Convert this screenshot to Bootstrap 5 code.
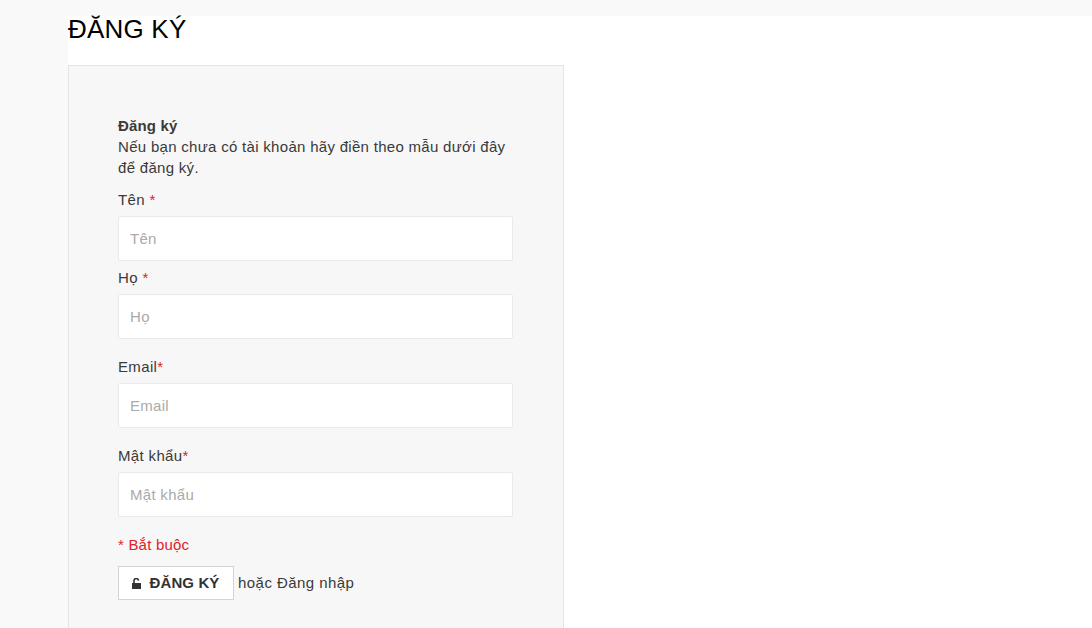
<!DOCTYPE html>
<html lang="vi">
<head>
    <meta charset="UTF-8">
    <meta name="viewport" content="width=device-width, initial-scale=1.0">
    <title>Đăng ký</title>
    <link href="https://cdn.jsdelivr.net/npm/bootstrap@5.3.2/dist/css/bootstrap.min.css" rel="stylesheet">
    <style>
        html, body { height: 628px; overflow: hidden; }
        body { background: #f9f9f9; font-family: "Liberation Sans", Arial, sans-serif; font-size: 15px; color: #3a3a3a; letter-spacing: .45px; }
        .page-wrap { margin: 16px 0 0 68px; background: #fff; height: 612px; }
        .page-title { font-size: 26px; font-weight: 400; line-height: 27px; color: #000; margin: 0; height: 49px; letter-spacing: .2px; }
        .reg-box { width: 496px; height: 570px; background: #f7f7f7; border: 1px solid #e4e4e4; padding: 50px 49px 0; }
        .reg-intro { line-height: 21px; margin: 0 0 11px; width: 395px; letter-spacing: .3px; }
        .reg-intro strong { display: block; line-height: 20px; letter-spacing: .15px; }
        .reg-label { display: block; line-height: 22px; margin-bottom: 5px; letter-spacing: .35px; }
        .req { color: #e2202c; }
        .reg-input { display: block; height: 45px; width: 395px; border: 1px solid #eaeaea; border-radius: 2px; padding: 0 11px; font-size: 15px; letter-spacing: .3px; background: #fff; color: #333; }
        .reg-input::placeholder { color: #aaa; opacity: 1; }
        .field-1 { margin-bottom: 6px; }
        .field-2 { margin-bottom: 17px; }
        .req-note { color: #e2202c; line-height: 22px; margin: 17px 0 10px; letter-spacing: .2px; }
        .reg-btn { height: 34px; width: 116px; background: #fff; border: 1px solid #d4d4d4; border-radius: 0; font-weight: 700; color: #333; font-size: 15px; letter-spacing: .1px; padding: 0 1px 0 0; column-gap: 9px; }
        .reg-btn:hover { background: #fff; color: #333; border-color: #d4d4d4; }
    </style>
</head>
<body>
    <div class="page-wrap">
        <h1 class="page-title">ĐĂNG KÝ</h1>
        <div class="reg-box">
            <p class="reg-intro"><strong>Đăng ký</strong>Nếu bạn chưa có tài khoản hãy điền theo mẫu dưới đây để đăng ký.</p>
            <form>
                <div class="field-1">
                    <label class="reg-label">Tên <span class="req">*</span></label>
                    <input class="reg-input" type="text" placeholder="Tên">
                </div>
                <div class="field-2">
                    <label class="reg-label">Họ <span class="req">*</span></label>
                    <input class="reg-input" type="text" placeholder="Họ">
                </div>
                <div class="field-2">
                    <label class="reg-label">Email<span class="req">*</span></label>
                    <input class="reg-input" type="email" placeholder="Email">
                </div>
                <div>
                    <label class="reg-label">Mật khẩu<span class="req">*</span></label>
                    <input class="reg-input" type="password" placeholder="Mật khẩu">
                </div>
                <p class="req-note">* Bắt buộc</p>
                <div class="d-flex align-items-center gap-1">
                    <button type="button" class="btn reg-btn d-flex align-items-center justify-content-center">
                        <svg width="9" height="11" viewBox="0 0 9 11"><path d="M0 5h9v6H0z" fill="#333"/><path d="M2 5V3a2.3 2.3 0 0 1 4.6-.4" fill="none" stroke="#333" stroke-width="1.6"/></svg>
                        ĐĂNG KÝ
                    </button>
                    <span>hoặc Đăng nhập</span>
                </div>
            </form>
        </div>
    </div>
    <script src="https://cdn.jsdelivr.net/npm/bootstrap@5.3.2/dist/js/bootstrap.bundle.min.js"></script>
</body>
</html>
